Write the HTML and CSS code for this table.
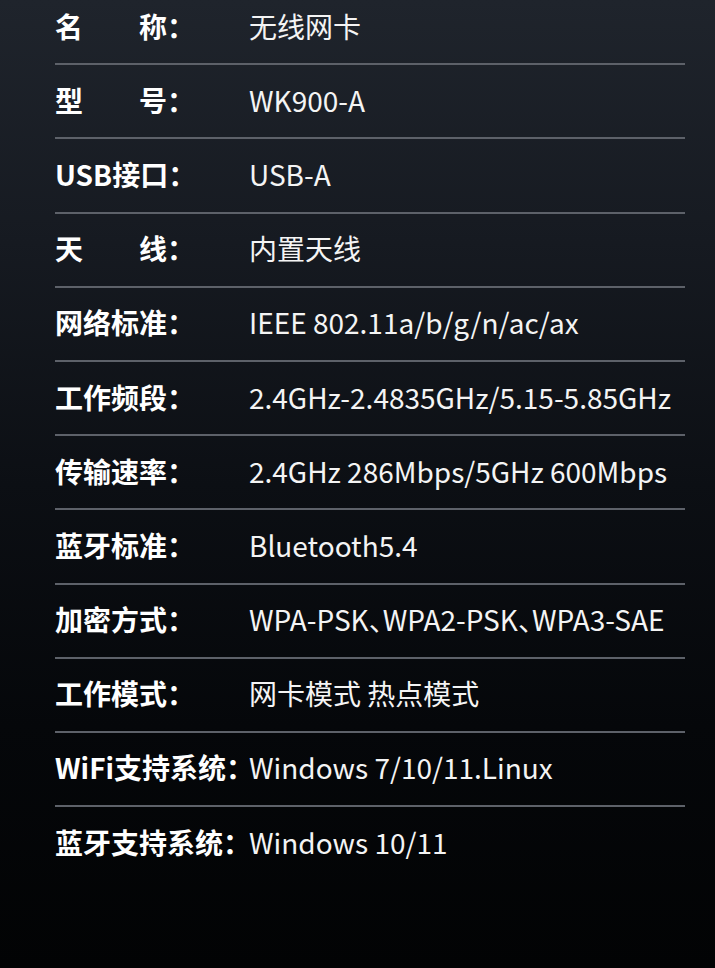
FILE: index.html
```html
<!DOCTYPE html>
<html>
	<head>
		<meta charset="UTF-8">
		<title>产品参数</title>
		<link rel="stylesheet" href="styles.css">
	</head>
	<body>
        <div class="specs">
            <div class="row"><span class="label">名　　称：</span><span class="value">无线网卡</span></div>
            <div class="row"><span class="label">型　　号：</span><span class="value">WK900-A</span></div>
            <div class="row"><span class="label">USB接口：</span><span class="value">USB-A</span></div>
            <div class="row"><span class="label">天　　线：</span><span class="value">内置天线</span></div>
            <div class="row"><span class="label">网络标准：</span><span class="value">IEEE 802.11a/b/g/n/ac/ax</span></div>
            <div class="row"><span class="label">工作频段：</span><span class="value">2.4GHz-2.4835GHz/5.15-5.85GHz</span></div>
            <div class="row"><span class="label">传输速率：</span><span class="value">2.4GHz 286Mbps/5GHz 600Mbps</span></div>
            <div class="row"><span class="label">蓝牙标准：</span><span class="value">Bluetooth5.4</span></div>
            <div class="row"><span class="label">加密方式：</span><span class="value">WPA-PSK、WPA2-PSK、WPA3-SAE</span></div>
            <div class="row"><span class="label">工作模式：</span><span class="value">网卡模式 热点模式</span></div>
            <div class="row"><span class="label">WiFi支持系统：</span><span class="value">Windows 7/10/11.Linux</span></div>
            <div class="row last"><span class="label">蓝牙支持系统：</span><span class="value">Windows 10/11</span></div>
        </div>
	</body>
</html>
```

FILE: styles.css
```css
*{
    margin: 0;
    padding: 0;
}
html, body{
    height: 100%;
}
body{
    background: linear-gradient(180deg, #1f242c 0%, #161a21 25%, #0c0f14 50%, #05070a 75%, #020304 100%);
    font-family: "Noto Sans CJK SC", "Noto Sans", sans-serif;
    color: #f4f4f4;
    overflow: hidden;
}
.specs{
    width: 630px;
    margin: -9px 0 0 55px;
}
.row{
    box-sizing: border-box;
    height: 74.2px;
    padding-bottom: 3px;
    display: flex;
    align-items: center;
    border-bottom: 2px solid #5d6169;
    font-size: 28px;
    white-space: nowrap;
}
.row.last{
    border-bottom-color: transparent;
}
.label{
    width: 194px;
    flex-shrink: 0;
    font-weight: 700;
    color: #ffffff;
}
.value{
    font-weight: 400;
    font-feature-settings: "halt";  /* 顿号用半角宽度 */
}
```
